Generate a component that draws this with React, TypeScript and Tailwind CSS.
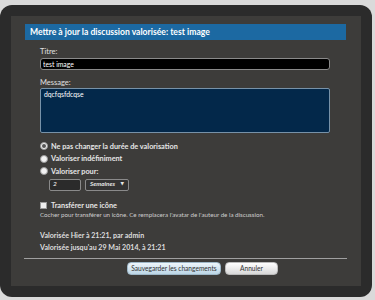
import React, { useState } from "react";

const font = { fontFamily: '"Lato", "DejaVu Sans", sans-serif' };

const Radio = ({ checked, label }: { checked?: boolean; label: string }) => (
    <label className="flex h-[12.5px] items-center gap-[3px]">
        <span className="flex h-[8px] w-[8px] items-center justify-center rounded-full border border-[#999] bg-[#f2f2f2]">
            {checked && <span className="h-[4px] w-[4px] rounded-full bg-[#555]" />}
        </span>
        <span className="text-[7.3px] leading-none font-bold text-[#e6e6e6]">{label}</span>
    </label>
);

const App = () => {
    const [titre, setTitre] = useState("test image");

    return (
        <div className="h-[300px] w-[375px] overflow-hidden bg-[#dadada] pt-[5px] leading-none" style={font}>
            <div className="h-[292px] w-[372px] rounded-[12px] bg-[#2b2b2b] p-[11px]">
                <div className="h-full bg-[#3d3c3a] pt-[8px]">
                    {/* header */}
                    <div className="ml-[14px] flex h-[16px] w-[321px] items-center bg-[#1c69a2] pl-[5px] text-[8.6px] font-bold text-white">
                        Mettre à jour la discussion valorisée: test image
                    </div>

                    <div className="ml-[29px] w-[290px]">
                        <div className="mt-[7px] flex h-[10px] items-center text-[7.5px] text-[#e0e0e0]">Titre:</div>
                        <input
                            value={titre}
                            onChange={(e) => setTitre(e.target.value)}
                            className="mt-[1px] block h-[12px] w-full rounded-[3px] border border-[#8a8a8a] bg-black px-[2px] text-[6.8px] text-white outline-none"
                        />

                        <div className="mt-[8px] flex h-[10px] items-center text-[7.5px] text-[#e0e0e0]">Message:</div>
                        <div className="h-[45px] w-full rounded-[2px] border border-[#7892a8] bg-[#03284a] px-[3px] pt-[2px] text-[6.8px] text-white">
                            dqcfqsfdcqse
                        </div>

                        {/* radios */}
                        <div className="mt-[7px] flex flex-col">
                            <Radio checked label="Ne pas changer la durée de valorisation" />
                            <Radio label="Valoriser indéfiniment" />
                            <Radio label="Valoriser pour:" />
                        </div>
                        <div className="ml-[9px] mt-[1px] flex gap-[4px]">
                            <div className="flex h-[12px] w-[32px] items-center rounded-[2px] border border-[#8a8a8a] bg-[#2b2b2b] pl-[3px] text-[6.5px] italic text-white">
                                2
                            </div>
                            <div className="flex h-[12px] w-[44px] items-center justify-between rounded-[2px] border border-[#8a8a8a] bg-[#333] px-[4px] text-[6.3px] font-bold italic text-[#e6e6e6]">
                                <span>Semaines</span>
                                <span className="text-[4.5px] not-italic">▼</span>
                            </div>
                        </div>

                        {/* checkbox */}
                        <div className="mt-[10px] flex h-[10px] items-center gap-[4px]">
                            <span className="h-[7px] w-[7px] border border-[#999] bg-[#eee]" />
                            <span className="text-[7.3px] font-bold text-[#e6e6e6]">Transférer une icône</span>
                        </div>
                        <div className="mt-[1px] flex h-[8px] items-center whitespace-nowrap text-[6.2px] text-[#cfcfcf]">
                            Cocher pour transférer un icône. Ce remplacera l'avatar de l'auteur de la discussion.
                        </div>

                        <div className="mt-[11px] flex h-[10px] items-center text-[7.1px] font-bold text-[#dedede]">
                            Valorisée Hier à 21:21, par admin
                        </div>
                        <div className="mt-[2px] flex h-[10px] items-center text-[7.1px] font-bold text-[#dedede]">
                            Valorisée jusqu'au 29 Mai 2014, à 21:21
                        </div>
                    </div>

                    {/* divider */}
                    <div className="ml-[13px] mt-[5px] h-[1px] w-[323px] bg-[#a0a0a0]" />

                    <div className="ml-[116px] mt-[3px] flex gap-[4px]">
                        <button className="h-[13px] w-[94px] rounded-[4px] border border-[#9fb8c8] bg-gradient-to-b from-[#eef6fb] to-[#bcd6e6] text-[6.6px] leading-none text-[#333]">
                            Sauvegarder les changements
                        </button>
                        <button className="h-[13px] w-[53px] rounded-[4px] border border-[#bbb] bg-gradient-to-b from-white to-[#d8d8d8] text-[6.6px] leading-none text-[#333]">
                            Annuler
                        </button>
                    </div>
                </div>
            </div>
        </div>
    );
};

export default App;
